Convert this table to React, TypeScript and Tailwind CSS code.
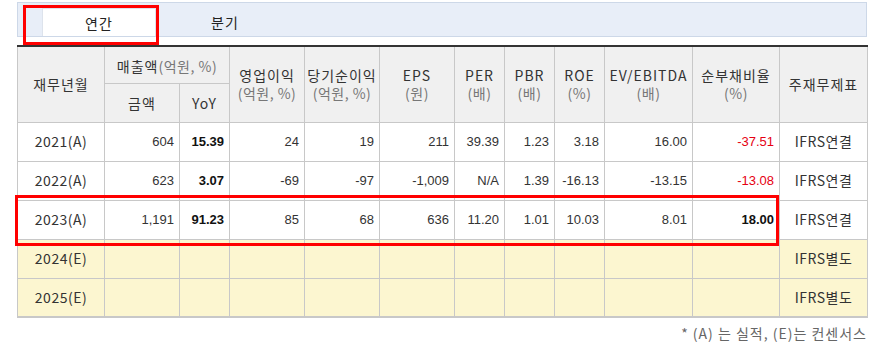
import React from "react";

type Row = {
  label: string;
  values: string[];
  estimate?: boolean;
  std: string;
};

const rows: Row[] = [
  {
    label: "2021(A)",
    values: ["604", "15.39", "24", "19", "211", "39.39", "1.23", "3.18", "16.00", "-37.51"],
    std: "IFRS연결",
  },
  {
    label: "2022(A)",
    values: ["623", "3.07", "-69", "-97", "-1,009", "N/A", "1.39", "-16.13", "-13.15", "-13.08"],
    std: "IFRS연결",
  },
  {
    label: "2023(A)",
    values: ["1,191", "91.23", "85", "68", "636", "11.20", "1.01", "10.03", "8.01", "18.00"],
    std: "IFRS연결",
  },
  { label: "2024(E)", values: Array(10).fill(""), estimate: true, std: "IFRS별도" },
  { label: "2025(E)", values: Array(10).fill(""), estimate: true, std: "IFRS별도" },
];

const kr = "font-['Noto_Sans_CJK_KR','Noto_Sans',sans-serif]";
const num = "font-['Liberation_Sans','Noto_Sans_CJK_KR',sans-serif]";

const widths = [87, 75, 50, 75, 75, 75, 50, 50, 50, 88, 87, 88];

const HeadCell: React.FC<{ title: string; unit?: string; rowSpan?: number; colSpan?: number; inline?: boolean }> = ({
  title,
  unit,
  rowSpan,
  colSpan,
  inline,
}) => (
  <th
    rowSpan={rowSpan}
    colSpan={colSpan}
    className="border border-[#c8c8c8] bg-[#f0f0f0] font-normal text-center align-middle p-0"
  >
    {inline ? (
      <span className="text-[14px] leading-[18px] text-[#333] tracking-[1px]">
        {title}
        <span className="text-[#777] tracking-[0.5px]">{unit}</span>
      </span>
    ) : (
      <div className="flex flex-col items-center">
        <span className="text-[14px] leading-[18px] text-[#333] tracking-[1px]">{title}</span>
        {unit && <span className="text-[14px] leading-[18px] text-[#777] tracking-[0.5px]">{unit}</span>}
      </div>
    )}
  </th>
);

export default function App() {
  return (
    <div className={`relative w-[872px] h-[342px] bg-white ${kr}`}>
      {/* tabs */}
      <div className="ml-[17px] mt-[2px] w-[850px] h-[35px] bg-[#e8eef8] border border-[#cdd8e8] flex items-end pl-[24px]">
        <div className="w-[114px] h-[28px] bg-white border-t border-l border-r border-[#dde3ec] flex items-center justify-center text-[14px] text-[#222] tracking-[1px] pt-[1px]">
          연간
        </div>
        <div className="w-[114px] h-[28px] ml-[12px] flex items-center justify-center text-[14px] text-[#222] tracking-[1px] pt-[1px]">
          분기
        </div>
      </div>

      {/* table */}
      <table className="ml-[17px] mt-[8px] w-[850px] table-fixed border-collapse border-t-2 border-t-[#333] border-b-2 border-b-[#c8c8c8]">
        <colgroup>
          {widths.map((w, i) => (
            <col key={i} style={{ width: w }} />
          ))}
        </colgroup>
        <thead>
          <tr className="h-[37px]">
            <HeadCell title="재무년월" rowSpan={2} />
            <HeadCell title="매출액" unit="(억원, %)" colSpan={2} inline />
            <HeadCell title="영업이익" unit="(억원, %)" rowSpan={2} />
            <HeadCell title="당기순이익" unit="(억원, %)" rowSpan={2} />
            <HeadCell title="EPS" unit="(원)" rowSpan={2} />
            <HeadCell title="PER" unit="(배)" rowSpan={2} />
            <HeadCell title="PBR" unit="(배)" rowSpan={2} />
            <HeadCell title="ROE" unit="(%)" rowSpan={2} />
            <HeadCell title="EV/EBITDA" unit="(배)" rowSpan={2} />
            <HeadCell title="순부채비율" unit="(%)" rowSpan={2} />
            <HeadCell title="주재무제표" rowSpan={2} />
          </tr>
          <tr className="h-[39px]">
            <HeadCell title="금액" />
            <HeadCell title="YoY" />
          </tr>
        </thead>
        <tbody>
          {rows.map((r) => (
            <tr
              key={r.label}
              className={`h-[39px] ${r.estimate ? "bg-[#fcf6d0]" : "bg-white"}`}
            >
              <td className="border border-[#c8c8c8] text-center text-[14px] text-[#333] tracking-[0.5px] p-0">
                {r.label}
              </td>
              {r.values.map((v, i) => {
                const bold = i === 1 || (r.label === "2023(A)" && i === 9);
                const red = i === 9 && v.startsWith("-");
                return (
                  <td
                    key={i}
                    className={`border border-[#c8c8c8] text-right pr-[5px] text-[13px] ${num} ${
                      bold ? "font-bold text-[#111]" : "text-[#333]"
                    } ${red ? "text-[#e60012]" : ""}`}
                  >
                    {v}
                  </td>
                );
              })}
              <td className="border border-[#c8c8c8] text-center text-[14px] text-[#333] tracking-[0.5px] p-0">
                {r.std}
              </td>
            </tr>
          ))}
        </tbody>
      </table>

      <div className="w-[867px] text-right text-[14px] text-[#666] tracking-[1px] mt-[5px] leading-[20px]">
        * (A) 는 실적, (E)는 컨센서스
      </div>

      {/* red highlight annotations */}
      <div className="absolute left-[23px] top-[3px] w-[136px] h-[40px] border-[3px] border-[#ff0000]" />
      <div className="absolute left-[15px] top-[193px] w-[764px] h-[51px] border-[3px] border-[#ff0000]" />
    </div>
  );
}
